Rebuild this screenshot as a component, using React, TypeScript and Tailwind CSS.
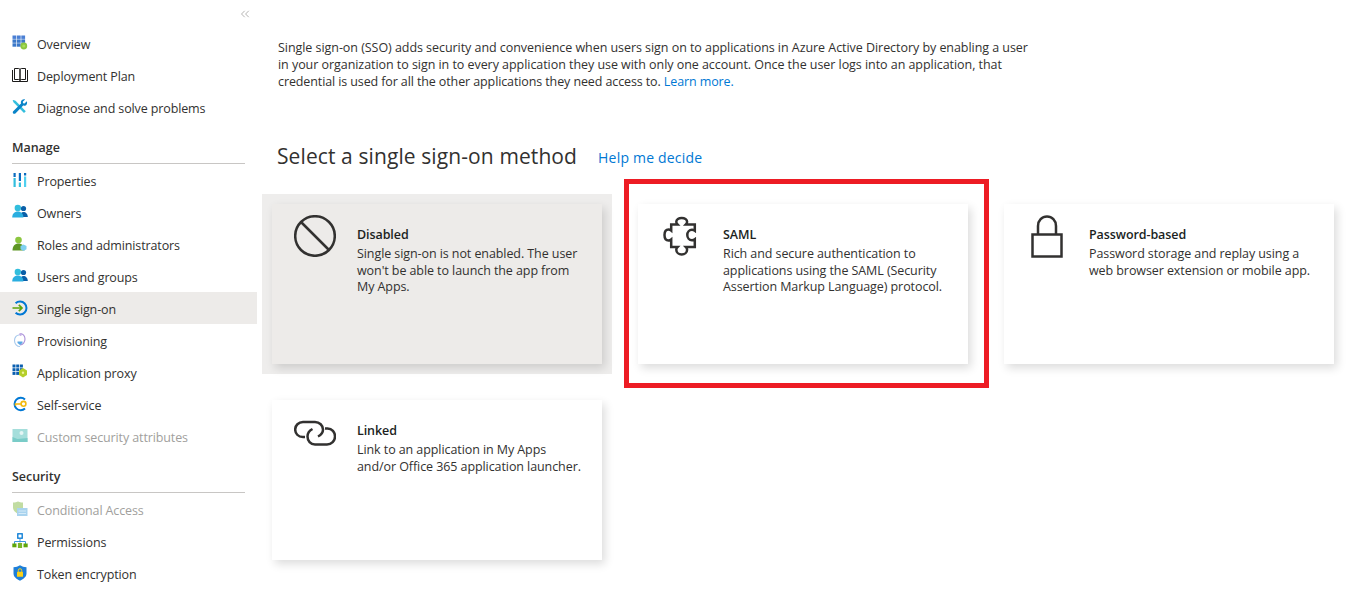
import React from "react";
import { ChevronsLeft } from "lucide-react";

const I = ({ children, vb = "0 0 16 16" }: { children: React.ReactNode; vb?: string }) => (
  <svg width="16" height="16" viewBox={vb} className="shrink-0 -mt-[4px]">{children}</svg>
);

const OverviewIcon = () => (
  <I>
    {[0, 1, 2].flatMap((r) =>
      [0, 1, 2].map((c) => <rect key={`${r}${c}`} x={0.5 + c * 4.4} y={0.5 + r * 3.9} width="3.8" height="3.4" fill={r === 0 ? "#4a7fd4" : "#3b78c9"} />)
    )}
    <circle cx="11.8" cy="11" r="3.4" fill="#8cc63f" />
    <circle cx="11.8" cy="11" r="1.6" fill="#a8dc5a" />
  </I>
);
const BookIcon = () => (
  <I>
    <path d="M2.5 1.5h4.2c.7 0 1.3.5 1.3 1.2v10.8c0-.6-.6-1-1.3-1H2.5zM13.5 1.5H9.3c-.7 0-1.3.5-1.3 1.2v10.8c0-.6.6-1 1.3-1h4.2z" fill="none" stroke="#1b1a19" strokeWidth="1" />
    <path d="M.5 3v11.5h15V3" fill="none" stroke="#1b1a19" strokeWidth="1" />
  </I>
);
const ToolsIcon = () => (
  <I>
    <path d="M1.5 1l2 .8 10.3 10.4-1.8 1.8L1.7 3.6.6 1.600z" fill="#32bedd" />
    <path d="M14.8 2.2l-2.3 2.3-1.4-.3-.3-1.4L13.1.5C11.3-.1 9.2.9 8.9 2.8c-.1.6 0 1.1.1 1.6L1.2 12.2c-.6.6-.6 1.6 0 2.2.6.6 1.6.6 2.2 0l7.8-7.8c.5.1 1 .2 1.6.1 1.9-.3 2.8-2.6 2-4.5z" fill="#0a84c8" />
  </I>
);
const PropsIcon = () => (
  <I>
    <rect x="1.5" y="1" width="2.2" height="4" fill="#0a6cc0" />
    <rect x="1.5" y="6" width="2.2" height="9" fill="#32bedd" />
    <rect x="6.8" y="1" width="2.2" height="8" fill="#0a6cc0" />
    <rect x="6.8" y="10.5" width="2.2" height="4.5" fill="#32bedd" />
    <rect x="12" y="1" width="2.2" height="2.5" fill="#0a6cc0" />
    <rect x="12" y="4.5" width="2.2" height="10.5" fill="#50d0f0" />
  </I>
);
const PeopleIcon = () => (
  <I>
    <circle cx="11.5" cy="4.5" r="2.6" fill="#0a5fa8" />
    <path d="M8 13c0-3 1.300-5 3.500-5s4.300 2 4.300 5z" fill="#0a5fa8" />
    <circle cx="5.800" cy="4" r="3.200" fill="#32bedd" />
    <path d="M.2 13.4c0-3.600 2.200-6 5.600-6s5.600 2.400 5.600 6z" fill="#2aaee0" />
  </I>
);
const RolesIcon = () => (
  <I>
    <circle cx="6.5" cy="4" r="3.3" fill="#8cc63f" />
    <path d="M.5 14.5c0-4.5 2.5-7 6-7s6 2.5 6 7z" fill="#5e9624" />
    <path d="M11.5 8.5l3 1.6v3.2l-3 1.7-3-1.7v-3.2z" fill="#7fd0f0" />
  </I>
);
const SsoIcon = () => (
  <I>
    <path d="M3.6 3.2A6.5 6.5 0 1 1 3.6 12.8" fill="none" stroke="#0078d4" strokeWidth="2" />
    <path d="M.5 8h9M6.8 4.8L10 8l-3.2 3.2" fill="none" stroke="#5ea50a" strokeWidth="1.7" />
  </I>
);
const ProvIcon = () => (
  <I>
    <path d="M8 1.500c3 0 5 2.400 5 5.500s-2 6-5 6" fill="none" stroke="#a98fd8" strokeWidth="1.100" />
    <path d="M8 14.500C5 14.500 2.500 12 2.500 8.500S5 3 7 3" fill="none" stroke="#a5c8ec" strokeWidth="1.100" />
    <circle cx="8.500" cy="2.500" r="1.400" fill="#c4b0e6" />
    <path d="M5.500 9.500h5v1.500l-2.500 2-2.500-2z" fill="#5aa8e4" />
  </I>
);
const ProxyIcon = () => (
  <I>
    {[0, 1, 2].flatMap((r) =>
      [0, 1, 2].map((c) => <rect key={`${r}${c}`} x={0.5 + c * 3.7} y={0.5 + r * 3.7} width="3" height="3" fill="#0a5fb0" />)
    )}
    <path d="M11 4l4 2.5v4.5l-4 2.500-4-2.500V6.500z" fill="#b5cf2a" />
    <circle cx="11" cy="8.700" r="1.200" fill="#eef2a0" />
  </I>
);
const SelfIcon = () => (
  <I>
    <path d="M13 3.500A6.200 6.200 0 1 0 13 12.500" fill="none" stroke="#0078d4" strokeWidth="2" />
    <circle cx="11.500" cy="7.800" r="2.400" fill="none" stroke="#f2b90f" strokeWidth="1.600" />
    <path d="M9.500 8H3.500v1.800" fill="none" stroke="#f2b90f" strokeWidth="1.600" />
  </I>
);
const CustomIcon = () => (
  <I>
    <rect x="0.500" y="1" width="15" height="13" fill="#a5dedb" />
    <path d="M.5 14V9l5 2 10-1v4z" fill="#7accc8" />
    <circle cx="9.500" cy="5" r="2" fill="#e4f5f4" />
  </I>
);
const CondIcon = () => (
  <I>
    <path d="M1 1.500C3 1.500 5 1 6 .5c1 .5 3 1 5 1v5c0 3-2.500 5-5 6.500-2.500-1.500-5-3.500-5-6.500z" fill="#c1dca2" />
    <rect x="5" y="7" width="10.500" height="8" fill="#a9d3ee" />
    <path d="M6.500 10h7.500M6.500 12.500h7.500" stroke="#d5ebf8" strokeWidth="1" />
  </I>
);
const PermIcon = () => (
  <I>
    <rect x="5.800" y="0.800" width="4.400" height="4.400" fill="#fff" stroke="#0078d4" strokeWidth="1.300" />
    <path d="M8 5.500v4M2.500 11V8.500h11V11" fill="none" stroke="#3a96dd" strokeWidth="1" />
    <rect x="0.300" y="10.500" width="4.200" height="3.800" fill="#5ea50a" />
    <rect x="5.900" y="10" width="4.200" height="5" fill="#7ab82a" />
    <rect x="11.500" y="10.500" width="4.200" height="3.800" fill="#5ea50a" />
  </I>
);
const TokenIcon = () => (
  <I>
    <path d="M8 .3c2 1.300 4 2 6.500 2v6.200c0 3-2.700 5.500-6.500 7.200-3.800-1.700-6.500-4.200-6.500-7.200V2.300C4 2.300 6 1.600 8 .3z" fill="#1e7fd8" />
    <rect x="5" y="6.800" width="6" height="5" rx=".5" fill="#fcd116" />
    <path d="M6.300 6.800V5.400a1.700 1.700 0 0 1 3.400 0v1.400" fill="none" stroke="#fcd116" strokeWidth="1" />
  </I>
);

type Row = { label: string; icon: React.ReactNode; active?: boolean; muted?: boolean };

const top: Row[] = [
  { label: "Overview", icon: <OverviewIcon /> },
  { label: "Deployment Plan", icon: <BookIcon /> },
  { label: "Diagnose and solve problems", icon: <ToolsIcon /> },
];
const manage: Row[] = [
  { label: "Properties", icon: <PropsIcon /> },
  { label: "Owners", icon: <PeopleIcon /> },
  { label: "Roles and administrators", icon: <RolesIcon /> },
  { label: "Users and groups", icon: <PeopleIcon /> },
  { label: "Single sign-on", icon: <SsoIcon />, active: true },
  { label: "Provisioning", icon: <ProvIcon /> },
  { label: "Application proxy", icon: <ProxyIcon /> },
  { label: "Self-service", icon: <SelfIcon /> },
  { label: "Custom security attributes", icon: <CustomIcon />, muted: true },
];
const security: Row[] = [
  { label: "Conditional Access", icon: <CondIcon />, muted: true },
  { label: "Permissions", icon: <PermIcon /> },
  { label: "Token encryption", icon: <TokenIcon /> },
];

const NavRow = ({ r }: { r: Row }) => (
  <div className={`flex h-8 items-center gap-[9px] pl-3 pt-[4px] tracking-[-0.12px] ${r.active ? "bg-[#edebe9]" : ""} ${r.muted ? "text-[#a19f9d]" : "text-[#323130]"}`}>
    {r.icon}
    <span>{r.label}</span>
  </div>
);

const Section = ({ title, rows }: { title: string; rows: Row[] }) => (
  <div className="mt-[17px]">
    <div className="mx-3 h-[24px] border-b border-[#c8c6c4] pt-px font-semibold text-[#323130] leading-[14px]">{title}</div>
    {rows.map((r) => <NavRow key={r.label} r={r} />)}
  </div>
);

const Card = ({ title, icon, lines }: { title: string; icon: React.ReactNode; lines: string[] }) => (
  <div className="flex h-[160px] w-[330px] bg-inherit pt-[23px] shadow-[3px_4px_9px_rgba(0,0,0,0.14)]">
    <div className="w-[85px] shrink-0 pl-[22px] -mt-[12px]">{icon}</div>
    <div className="leading-[16.6px] tracking-[-0.08px] text-[#323130]">
      <div className="font-semibold text-[#201f1e] leading-[16px] mb-[3px]">{title}</div>
      {lines.map((l) => <div key={l}>{l}</div>)}
    </div>
  </div>
);

const stroke = { fill: "none", stroke: "#323130", strokeWidth: 2.5 };

export default function App() {
  return (
    <div className="flex h-[599px] w-[1354px] overflow-hidden bg-white text-[12.5px] tracking-[-0.05px] font-['Open_Sans',sans-serif] text-[#323130]">
      <aside className="w-[257px] shrink-0">
        <div className="flex h-[27px] justify-end pr-[5px] pt-[7px]">
          <ChevronsLeft size={14} strokeWidth={1.1} color="#8a8886" />
        </div>
        {top.map((r) => <NavRow key={r.label} r={r} />)}
        <Section title="Manage" rows={manage} />
        <Section title="Security" rows={security} />
      </aside>
      <main className="flex-1 pl-[5px]">
        <div className="ml-[16px] mt-[39px] leading-[17px] text-[#323130]">
          <div>Single sign-on (SSO) adds security and convenience when users sign on to applications in Azure Active Directory by enabling a user</div>
          <div>in your organization to sign in to every application they use with only one account. Once the user logs into an application, that</div>
          <div className="tracking-[-0.11px]">credential is used for all the other applications they need access to. <span className="text-[#0078d4]">Learn more.</span></div>
        </div>
        <div className="ml-[15px] mt-[52px] flex h-[30px] items-center">
          <h1 className="text-[21px] tracking-[0.1px] text-[#323130]">Select a single sign-on method</h1>
          <span className="ml-[21px] mt-px text-[14px] tracking-[0.2px] text-[#0078d4]">Help me decide</span>
        </div>
        <div className="mt-[22px] grid grid-cols-[350px_350px_350px] gap-x-[16px] gap-y-[16px]">
          <div className="bg-[#eeedec] p-[10px]">
            <div className="bg-[#edebe9]">
              <Card title="Disabled" lines={["Single sign-on is not enabled. The user", "won't be able to launch the app from", "My Apps."]} icon={
                <svg width="42" height="42" viewBox="0 0 42 42" style={stroke}><circle cx="21" cy="21" r="19.800" /><path d="M7 7l28 28" /></svg>
              } />
            </div>
          </div>
          <div className="relative p-[10px]">
            <div className="bg-white">
              <Card title="SAML" lines={["Rich and secure authentication to", "applications using the SAML (Security", "Assertion Markup Language) protocol."]} icon={
                <svg width="42" height="42" viewBox="0 0 42 42" style={stroke} className="-ml-[2px]"><path d="M13.200 9.500H19.500C18.600 8.600 18.300 7.700 18.300 6.800C18.300 4.500 20.700 2.900 23.700 2.900C26.700 2.900 29.100 4.500 29.100 6.800C29.100 7.700 28.800 8.600 27.900 9.500H36.800V15.800C35.800 15.100 34.900 14.800 34 14.800C31.300 14.800 29.300 17.100 29.300 20C29.300 22.900 31.300 25.200 34 25.200C34.900 25.200 35.800 24.900 36.800 24.200V32H27.900C28.800 32.900 29.100 33.800 29.100 34.700C29.100 37.400 26.700 39.500 23.700 39.500C20.700 39.500 18.300 37.400 18.300 34.700C18.300 33.800 18.600 32.900 19.500 32H13.200V24.500C12.400 25.200 11.400 25.500 10.500 25.500C7.800 25.500 6.500 23 6.500 20C6.500 17 7.800 14.500 10.500 14.500C11.400 14.500 12.400 14.800 13.200 15.500Z" /></svg>
              } />
            </div>
            <div className="pointer-events-none absolute -left-[4px] -right-[11px] -top-[15px] -bottom-[14px] border-[5px] border-[#ed1c24]" />
          </div>
          <div className="p-[10px]">
            <div className="bg-white">
              <Card title="Password-based" lines={["Password storage and replay using a", "web browser extension or mobile app."]} icon={
                <svg width="42" height="46" viewBox="0 0 42 46" style={stroke} className="ml-[5px]"><rect x="1.500" y="19.500" width="29" height="22" /><path d="M7 19.500V11c0-5.500 4-9.500 9-9.500s9 4 9 9.500v8.500" /></svg>
              } />
            </div>
          </div>
          <div className="p-[10px]">
            <div className="bg-white">
              <Card title="Linked" lines={["Link to an application in My Apps", "and/or Office 365 application launcher."]} icon={
                <svg width="42" height="42" viewBox="0 0 42 42" style={stroke}><path d="M11 26H9C4 26 1.200 22.500 1.200 18.500C1.200 14.500 4.500 11 9 11H21C25.500 11 29 14.500 29 18.500C29 21 27 24 24 25.500" /><path d="M31 17.500H33.500C38 17.500 41 21 41 25.500C41 30 37.500 33.500 33 33.500H21C16.500 33.500 13.500 30 13.500 25.500C13.500 22.500 15.500 19.500 18.500 18" /></svg>
              } />
            </div>
          </div>
        </div>
      </main>
    </div>
  );
}
